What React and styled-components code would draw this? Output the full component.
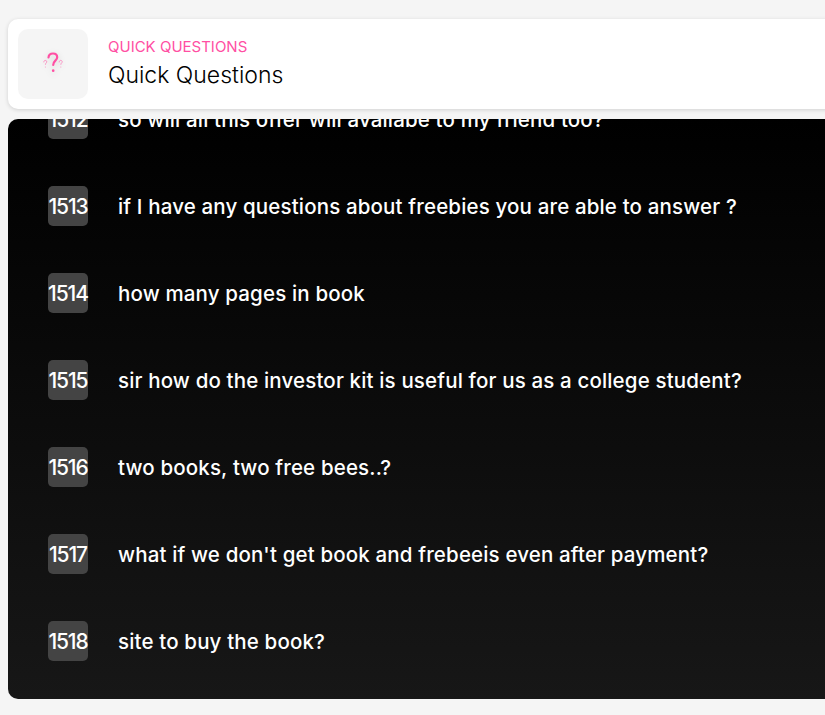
import React, { useLayoutEffect, useRef } from 'react'
import styled, { createGlobalStyle } from 'styled-components'

const questions = [
  { id: 1510, text: 'how can i get the book?' },
  { id: 1511, text: 'is the offer still available?' },
  { id: 1512, text: 'so will all this offer will availabe to my friend too?' },
  { id: 1513, text: 'if I have any questions about freebies you are able to answer ?' },
  { id: 1514, text: 'how many pages in book' },
  { id: 1515, text: 'sir how do the investor kit is useful for us as a college student?' },
  { id: 1516, text: 'two books, two free bees..?' },
  { id: 1517, text: "what if we don't get book and frebeeis even after payment?" },
  { id: 1518, text: 'site to buy the book?' },
]

function App() {
  const listRef = useRef(null)

  useLayoutEffect(() => {
    listRef.current.scrollTop = listRef.current.scrollHeight
  }, [])

  return (
    <Main>
      <GlobalStyle />
      <Header>
        <IconBox>
          <svg width="24" height="24" viewBox="0 0 24 24" fill="none" stroke="#ff4fa3" strokeLinecap="round">
            <path d="M7.500 5.500c.2-2.500 2.100-4 4.500-4 2.500 0 4.200 1.500 4.200 3.700 0 3.400-4 3.600-4 7.800" strokeWidth="2.200" />
            <path d="M12.200 18.500v.2" strokeWidth="2.600" />
            <path d="M2.800 10c0-1 .7-1.600 1.500-1.600s1.500.6 1.500 1.400c0 1.100-1.400 1.200-1.400 2.600M4.400 15v.1" strokeWidth="1" opacity=".55" />
            <path d="M18.200 10c0-1 .7-1.600 1.500-1.600s1.500.6 1.500 1.400c0 1.100-1.400 1.200-1.400 2.600M19.800 15v.1" strokeWidth="1" opacity=".55" />
          </svg>
        </IconBox>
        <Titles>
          <Eyebrow>QUICK QUESTIONS</Eyebrow>
          <Title>Quick Questions</Title>
        </Titles>
      </Header>
      <Panel ref={listRef}>
        {questions.map((q) => (
          <Row key={q.id}>
            <Badge>{q.id}</Badge>
            <Question>{q.text}</Question>
          </Row>
        ))}
      </Panel>
    </Main>
  )
}

export default App

const GlobalStyle = createGlobalStyle`
  html, body {
    margin: 0;
    height: 715px;
    overflow: hidden;
    background: #f5f5f5;
  }
`

const Main = styled.div`
  width: 900px;
  padding: 19px 0 16px 8px;
  box-sizing: border-box;
  display: flex;
  flex-direction: column;
  gap: 10px;
  font-family: Inter, "Liberation Sans", sans-serif;
`

const Header = styled.div`
  height: 90px;
  box-sizing: border-box;
  padding: 10px;
  display: flex;
  align-items: center;
  gap: 20px;
  background: #fff;
  border-radius: 10px;
  box-shadow: 0 1px 4px rgba(0, 0, 0, 0.15);
`

const IconBox = styled.div`
  width: 70px;
  height: 70px;
  border-radius: 10px;
  background: #f5f5f5;
  display: flex;
  align-items: center;
  justify-content: center;

  svg {
    filter: drop-shadow(0 2px 3px rgba(0, 0, 0, 0.15));
  }
`

const Titles = styled.div`
  display: flex;
  flex-direction: column;
  gap: 5px;
  padding-bottom: 2px;
`

const Eyebrow = styled.div`
  font-size: 15px;
  line-height: 18px;
  color: #ff4fa3;
`

const Title = styled.div`
  font-size: 23px;
  line-height: 28px;
  font-weight: 300;
  color: #000;
`

const Panel = styled.div`
  height: 580px;
  box-sizing: border-box;
  padding: 0 0 38px 40px;
  display: flex;
  flex-direction: column;
  gap: 47px;
  overflow-y: scroll;
  scrollbar-width: none;
  border-radius: 10px;
  background: linear-gradient(180deg, #000 0%, #171717 100%);
`

const Row = styled.div`
  display: flex;
  align-items: center;
  gap: 30px;
  flex-shrink: 0;
`

const Badge = styled.div`
  width: 40px;
  height: 40px;
  border-radius: 5px;
  background: #444;
  color: #fff;
  font-size: 21px;
  font-weight: 500;
  letter-spacing: -1.100px;
  display: flex;
  align-items: center;
  justify-content: center;
`

const Question = styled.div`
  color: #fff;
  font-size: 20.500px;
  font-weight: 550;
  letter-spacing: 0.150px;
  white-space: nowrap;
`
